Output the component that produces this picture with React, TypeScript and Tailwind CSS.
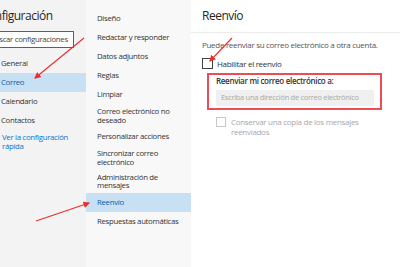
import React from 'react';

const font = { fontFamily: '"Open Sans", "Noto Sans", sans-serif' };

const mainItems = ['General', 'Correo', 'Calendario', 'Contactos'];

const mailItems = [
  ['Diseño'],
  ['Redactar y responder'],
  ['Datos adjuntos'],
  ['Reglas'],
  ['Limpiar'],
  ['Correo electrónico no', 'deseado'],
  ['Personalizar acciones'],
  ['Sincronizar correo', 'electrónico'],
  ['Administración de', 'mensajes'],
  ['Reenvío'],
  ['Respuestas automáticas'],
];

const Arrows: React.FC = () => (
  <svg className="absolute inset-0 pointer-events-none" width="400" height="267">
    <defs>
      <marker id="head" markerWidth="6" markerHeight="6" refX="5" refY="3" orient="auto">
        <path d="M0,0 L6,3 L0,6 Z" fill="#ee2b2e" />
      </marker>
    </defs>
    <line x1="84" y1="38" x2="35" y2="78" stroke="#ee2b2e" strokeWidth="1.1" markerEnd="url(#head)" />
    <line x1="36" y1="221" x2="89" y2="203" stroke="#ee2b2e" strokeWidth="1.1" markerEnd="url(#head)" />
    <line x1="232" y1="38" x2="210" y2="61" stroke="#ee2b2e" strokeWidth="1.1" markerEnd="url(#head)" />
  </svg>
);

const App: React.FC = () => {
  return (
    <div className="relative w-[400px] h-[267px] overflow-hidden flex bg-white text-[#333]" style={font}>
      {/* Left: settings categories */}
      <div className="w-[86px] shrink-0 h-full bg-[#f3f3f3] flex flex-col overflow-hidden">
        <div className="pt-[8px] h-[31px] whitespace-nowrap -ml-[19px] text-[12px] leading-[16px] tracking-[-0.5px] text-[#262626]">
          Configuración
        </div>
        <div className="-ml-[16px] w-[90px] h-[17px] shrink-0 border border-[#0078d4] bg-white flex items-center pl-[5px] text-[7.8px] tracking-[-0.3px] text-[#444] whitespace-nowrap">
          Buscar configuraciones
        </div>
        <div className="mt-[6px] flex flex-col">
          {mainItems.map(item => (
            <div
              key={item}
              className={
                item === 'Correo'
                  ? 'h-[19px] flex items-center pl-[1px] text-[7.8px] tracking-[-0.3px] bg-[#c7e0f4] text-[#0063b1]'
                  : 'h-[19px] flex items-center pl-[1px] text-[7.8px] tracking-[-0.3px] text-[#333]'
              }
            >
              {item}
            </div>
          ))}
        </div>
        <div className="mt-[3px] pl-[2px] text-[7.8px] tracking-[-0.3px] leading-[9px] text-[#0078d4] flex flex-col">
          <span>Ver la configuración</span>
          <span>rápida</span>
        </div>
      </div>

      {/* Middle: mail settings */}
      <div className="w-[105px] shrink-0 h-full bg-[#f8f8f8] flex flex-col pt-[9px]">
        {mailItems.map(lines => {
          const active = lines[0] === 'Reenvío';
          const tall = lines.length > 1;
          return (
            <div
              key={lines[0]}
              className={[
                'pl-[11px] text-[7.8px] tracking-[-0.3px] flex flex-col justify-center',
                tall ? 'leading-[8.5px]' : 'h-[19px]',
                tall && lines[0] === 'Administración de' ? 'py-[3.5px]' : tall ? 'py-[3px]' : '',
                active ? 'bg-[#c7e0f4] text-[#0063b1]' : 'text-[#333]',
              ].join(' ')}
            >
              {lines.map(l => (
                <span key={l} className="block">{l}</span>
              ))}
            </div>
          );
        })}
      </div>

      {/* Right: forwarding panel */}
      <div className="flex-1 h-full bg-white flex flex-col">
        <div className="h-[33px] shrink-0 border-b border-[#ececec] pl-[11px] pt-[8px] text-[12px] leading-[16px] tracking-[-0.5px] text-[#262626]">
          Reenvío
        </div>
        <div className="pl-[11px] pt-[7px] flex flex-col">
          <div className="text-[8px] tracking-[-0.3px] leading-[10px] text-[#555]">
            Puede reenviar su correo electrónico a otra cuenta.
          </div>
          <div className="mt-[8px] h-[11px] flex items-center gap-[4px]">
            <div className="w-[11px] h-[11px] border border-[#444] bg-white shrink-0" />
            <span className="text-[8px] tracking-[-0.3px] leading-[10px] text-[#333]">Habilitar el reenvío</span>
          </div>
          <div className="mt-[4px] ml-[5px] w-[175px] h-[37px] border-2 border-[#ee4b55] pl-[7px] pt-[0.5px] flex flex-col">
            <div className="text-[8px] font-semibold tracking-[-0.3px] text-[#333] leading-[10px]">
              Reenviar mi correo electrónico a:
            </div>
            <div className="mt-[4.5px] w-[158px] h-[16px] bg-[#f0f0f0] flex items-center pl-[5px] text-[7.5px] tracking-[-0.3px] text-[#a8a8a8] whitespace-nowrap">
              Escriba una dirección de correo electrónico
            </div>
          </div>
          <div className="mt-[7px] ml-[14px] flex items-start gap-[5px]">
            <div className="w-[10px] h-[10px] border border-[#c8c8c8] bg-white shrink-0" />
            <span className="text-[8px] tracking-[-0.3px] text-[#a8a8a8] leading-[10px] w-[128px]">
              Conservar una copia de los mensajes reenviados
            </span>
          </div>
        </div>
      </div>

      <Arrows />
    </div>
  );
};

export default App;
